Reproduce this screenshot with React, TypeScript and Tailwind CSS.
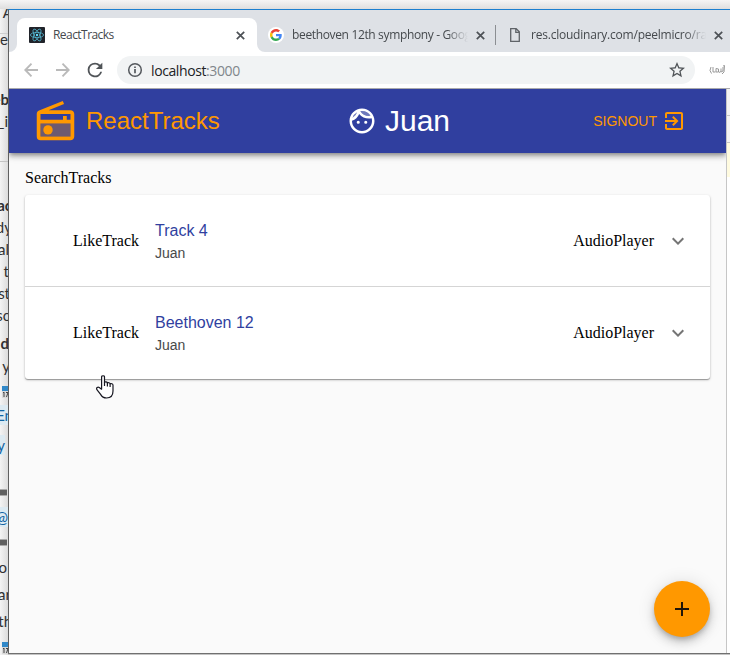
import React from "react";

const ui = "font-['Open_Sans',sans-serif]";

function Close() {
  return (
    <svg className="h-[9px] w-[9px] shrink-0" viewBox="0 0 9 9" stroke="#4d5156" strokeWidth="1.7" fill="none">
      <path d="M.8.8l7.4 7.4M8.2.8L.8 8.2" />
    </svg>
  );
}

function ReactLogo() {
  return (
    <svg className="h-4 w-4 shrink-0" viewBox="0 0 16 16" fill="none" stroke="#53b5cf" strokeWidth=".8">
      <rect width="16" height="16" rx="1" fill="#20232a" stroke="none" />
      <ellipse cx="8" cy="8" rx="6.6" ry="2.6" />
      <ellipse cx="8" cy="8" rx="6.6" ry="2.6" transform="rotate(60 8 8)" />
      <ellipse cx="8" cy="8" rx="6.6" ry="2.6" transform="rotate(120 8 8)" />
      <circle cx="8" cy="8" r="1.2" fill="#61dafb" stroke="none" />
    </svg>
  );
}

function GoogleLogo() {
  return (
    <svg className="h-4 w-4 shrink-0" viewBox="0 0 16 16">
      <circle cx="8" cy="8" r="8" fill="#fff" />
      <g transform="translate(2 2) scale(.25)">
        <path fill="#EA4335" d="M24 9.5c3.54 0 6.71 1.22 9.21 3.6l6.85-6.85C35.9 2.38 30.47 0 24 0 14.62 0 6.51 5.38 2.56 13.22l7.98 6.19C12.43 13.72 17.74 9.5 24 9.5z" />
        <path fill="#4285F4" d="M46.98 24.55c0-1.57-.15-3.09-.38-4.55H24v9.02h12.94c-.58 2.96-2.26 5.48-4.78 7.18l7.73 6c4.51-4.18 7.09-10.36 7.09-17.65z" />
        <path fill="#FBBC05" d="M10.53 28.59c-.48-1.45-.76-2.99-.76-4.59s.27-3.14.76-4.59l-7.98-6.19C.92 16.46 0 20.12 0 24c0 3.88.92 7.54 2.56 10.78l7.97-6.19z" />
        <path fill="#34A853" d="M24 48c6.48 0 11.93-2.13 15.89-5.81l-7.73-6c-2.15 1.45-4.92 2.3-8.16 2.3-6.26 0-11.57-4.22-13.47-9.91l-7.98 6.19C6.51 42.62 14.62 48 24 48z" />
      </g>
    </svg>
  );
}

function TabStrip() {
  return (
    <div className={`flex h-[42px] shrink-0 items-end bg-[#dee1e6] text-[12px] text-[#45494d] ${ui}`}>
      <svg className="h-2 w-2 shrink-0" viewBox="0 0 8 8"><path d="M8 0v8H0a8 8 0 0 0 8-8z" fill="#fff" /></svg>
      <div className="flex h-[34px] w-[240px] shrink-0 items-center rounded-t-lg bg-white pr-3 pl-3">
        <ReactLogo />
        <span className="ml-2 flex-1 tracking-[-0.55px]">ReactTracks</span>
        <Close />
      </div>
      <svg className="h-2 w-2 shrink-0" viewBox="0 0 8 8"><path d="M0 0v8h8a8 8 0 0 1-8-8z" fill="#fff" /></svg>
      <div className="flex h-[34px] w-[230px] shrink-0 items-center pl-[3px]">
        <GoogleLogo />
        <span className="ml-2 w-[176px] shrink-0 overflow-hidden whitespace-nowrap tracking-[-0.35px] [mask-image:linear-gradient(to_right,black_88%,transparent)]">beethoven 12th symphony - Google</span>
        <span className="ml-2 flex"><Close /></span>
      </div>
      <div className="mb-[7px] h-[20px] w-px shrink-0 bg-[#8b8e92]" />
      <div className="flex h-[34px] flex-1 items-center pl-[14px]">
        <svg className="h-[14px] w-[10px] shrink-0" viewBox="0 0 10 14" fill="none" stroke="#5f6368" strokeWidth="1.3">
          <path d="M.7.7h5.5l3.1 3.1v9.5H.7zM5.8.7v3.6h3.5" />
        </svg>
        <span className="ml-[11px] w-[175px] shrink-0 overflow-hidden whitespace-nowrap tracking-[-0.22px] [mask-image:linear-gradient(to_right,black_88%,transparent)]">res.cloudinary.com/peelmicro/raw/upload</span>
        <span className="ml-2 flex"><Close /></span>
      </div>
    </div>
  );
}

function Toolbar() {
  return (
    <div className="flex h-9 shrink-0 items-center bg-white">
      <svg className="ml-[15px] h-[14px] w-[14px]" viewBox="0 0 14 14" fill="none" stroke="#bababa" strokeWidth="1.9"><path d="M14 7H1.5M7.5.7L1.3 7l6.2 6.3" /></svg>
      <svg className="ml-[18px] h-[14px] w-[14px]" viewBox="0 0 14 14" fill="none" stroke="#bababa" strokeWidth="1.9"><path d="M0 7h12.5M6.5.7L12.7 7l-6.2 6.3" /></svg>
      <svg className="ml-[14px] h-[22px] w-[22px]" viewBox="0 0 24 24" fill="#505458"><path d="M17.65 6.35A7.96 7.96 0 0 0 12 4a8 8 0 1 0 7.73 10h-2.08A6 6 0 1 1 12 6c1.66 0 3.14.69 4.22 1.78L13 11h7V4l-2.35 2.35z" /></svg>
      <div className="ml-[11px] flex h-7 w-[578px] shrink-0 items-center rounded-full bg-[#f1f3f4] pr-2.5 pl-2.5">
        <svg className="h-4 w-4" viewBox="0 0 16 16" fill="none" stroke="#55595e" strokeWidth="1.5"><circle cx="8" cy="8" r="6.3" /><path d="M8 7.1v4.2M8 4.5v1.5" strokeWidth="1.7" /></svg>
        <span className={`ml-2 flex-1 text-[14px] tracking-[-0.4px] text-[#202124] ${ui}`}>localhost<span className="text-[#80868b]">:3000</span></span>
        <svg className="h-4 w-4" viewBox="2 2 20 20" fill="#505458"><path d="M22 9.24l-7.19-.62L12 2 9.19 8.63 2 9.24l5.46 4.73L5.82 21 12 17.27 18.18 21l-1.63-7.03L22 9.24zM12 15.4l-3.76 2.27 1-4.28-3.32-2.88 4.38-.38L12 6.1l1.71 4.04 4.38.38-3.32 2.88 1 4.28L12 15.4z" /></svg>
      </div>
      <svg className="ml-[14px] h-3 w-4" viewBox="0 0 16 12" fill="none" stroke="#999" strokeWidth="1">
        <path d="M2 3L1 6.500l1.500 3M4 3v5h2.500M7 4.500v3.500h2.500v-3zM10 8.500l2-1v-3M12 8l2-1V3M14 2l1.500-.5L15 8l-2 2" />
      </svg>
    </div>
  );
}

function AppHeader() {
  return (
    <header className="relative flex h-16 shrink-0 items-center bg-[#303f9f] font-['Liberation_Sans',Arial,sans-serif] text-[#ff9800] shadow-[0_2px_4px_-1px_rgba(0,0,0,0.3),0_4px_5px_rgba(0,0,0,0.18),0_1px_10px_rgba(0,0,0,0.14)]">
      <svg className="ml-6 h-[45px] w-[45px]" viewBox="0 0 24 24" fill="currentColor">
        <path d="M4 20h16v-7H4z" opacity=".3" />
        <path d="M3.24 6.15C2.51 6.43 2 7.17 2 8v12a2 2 0 0 0 2 2h16c1.11 0 2-.9 2-2V8c0-1.11-.89-2-2-2H8.3l8.26-3.34L15.88 1 3.24 6.15zM20 8v3h-2V9h-2v2H4V8h16zM4 20v-7h16v7H4z" />
        <circle cx="8" cy="16.48" r="2.5" />
      </svg>
      <span className="ml-2 w-[261px] text-[24px] leading-8">ReactTracks</span>
      <svg className="h-[30px] w-[30px] text-white" viewBox="0 0 24 24" fill="currentColor">
        <path opacity=".3" d="M10.66 4.12C12.06 6.44 14.6 8 17.5 8c.46 0 .91-.05 1.34-.12C17.44 5.56 14.9 4 12 4c-.46 0-.91.05-1.34.12zM4.42 9.47a8.046 8.046 0 0 0 3.66-4.44 8.046 8.046 0 0 0-3.66 4.44z" />
        <path d="M10.25 13a1.25 1.25 0 1 1-2.5 0 1.25 1.25 0 0 1 2.5 0zM15 11.75a1.25 1.25 0 1 0 0 2.5 1.25 1.25 0 0 0 0-2.5zm7 .25c0 5.52-4.48 10-10 10S2 17.52 2 12 6.48 2 12 2s10 4.48 10 10zM10.66 4.12C12.06 6.44 14.6 8 17.5 8c.46 0 .91-.05 1.34-.12C17.44 5.56 14.9 4 12 4c-.46 0-.91.05-1.34.12zM4.42 9.47a8.046 8.046 0 0 0 3.66-4.44 8.046 8.046 0 0 0-3.66 4.44zM20 12c0-.78-.12-1.53-.33-2.24-.7.15-1.42.24-2.17.24a10 10 0 0 1-7.76-3.69A10.016 10.016 0 0 1 4 11.86c.01.04 0 .09 0 .14 0 4.41 3.59 8 8 8s8-3.59 8-8z" />
      </svg>
      <span className="ml-2 flex-1 text-[30px] leading-9 text-white">Juan</span>
      <span className="text-[14px]">SIGNOUT</span>
      <svg className="mr-10 ml-[5px] h-6 w-6" viewBox="0 0 24 24" fill="currentColor">
        <path d="M10.09 15.59L11.5 17l5-5-5-5-1.41 1.41L12.67 11H3v2h9.67l-2.58 2.59zM19 3H5c-1.11 0-2 .9-2 2v4h2V5h14v14H5v-4H3v4c0 1.1.89 2 2 2h14c1.1 0 2-.9 2-2V5c0-1.1-.9-2-2-2z" />
      </svg>
    </header>
  );
}

function TrackRow({ title }: { title: string }) {
  return (
    <div className="flex h-[91px] items-center pl-12 font-['Liberation_Serif','Times_New_Roman',serif] text-[16px] text-black">
      <span className="w-[82px]">LikeTrack</span>
      <div className="flex flex-1 flex-col pt-0.5 font-['Liberation_Sans',Arial,sans-serif]">
        <span className="leading-6 text-[#303f9f]">{title}</span>
        <span className="text-[14px] leading-[21px] text-[#494949]">Juan</span>
      </div>
      <span>AudioPlayer</span>
      <svg className="mr-5 ml-3 h-6 w-6" viewBox="0 0 24 24" fill="#757575"><path d="M16.59 8.59L12 13.17 7.41 8.59 6 10l6 6 6-6z" /></svg>
    </div>
  );
}

const scraps: [string, string][] = [
  ["top-[2px] right-[-5px]", "? A"],
  ["top-[29px] right-0", "he"],
  ["top-[89px] right-[-1px] font-bold", "eb"],
  ["top-[111px] right-0", "_i"],
  ["top-[195px] right-[-4px] font-bold", "ac"],
  ["top-[217px] right-[-4px]", "dy"],
  ["top-[239px] right-[-1px]", "al"],
  ["top-[261px] right-[-1px]", "t"],
  ["top-[283px] right-[-2px]", "st"],
  ["top-[305px] right-[-2px]", "sc"],
  ["top-[333px] right-[-1px] font-bold", "d"],
  ["top-[356px] right-[-2px]", "y"],
  ["top-[405px] right-[-5px] bg-[#dceaf2] text-[#1264a3]", "En"],
  ["top-[435px] right-[3px] bg-[#dceaf2] text-[#1264a3]", "y"],
  ["top-[507px] right-0 bg-[#dceaf2] text-[#1264a3]", "@"],
  ["top-[557px] right-[1px]", "o"],
  ["top-[584px] right-[-3px]", "ar"],
  ["top-[611px] right-[-4px]", "th"],
];

function Behind() {
  return (
    <div className="relative w-2 shrink-0 overflow-hidden bg-gradient-to-r from-[#f4f4f4] to-[#dcdcdc] font-[Lato,sans-serif] text-[15px] leading-[20px] text-[#303133]">
      <div className="absolute top-[24px] h-px w-2 bg-[#cfcfcf]" />
      <div className="absolute top-[152px] h-px w-2 bg-[#c4c4c4]" />
      <div className="absolute top-[480px] h-[7px] w-[7px] border-y border-[#aaa] bg-[#606060]" />
      <div className="absolute top-[530px] h-[7px] w-[7px] border-y border-[#aaa] bg-[#606060]" />
      {scraps.map(([cls, text], i) => (
        <span key={i} className={`absolute -mt-[9px] whitespace-nowrap ${cls}`}>{text}</span>
      ))}
      <Calendar className="top-[376px]" />
      <Calendar className="top-[632px]" />
    </div>
  );
}

function Calendar({ className }: { className: string }) {
  return (
    <svg className={`absolute left-0.5 h-[14px] w-[7px] ${className}`} viewBox="0 0 7 14">
      <path d="M0 1h7v12H0z" fill="#d8d8d8" /><path d="M0 1h7v5H0z" fill="#3188c8" />
      <path d="M1 8l1-1v5M4 7.5h2L4.5 12" fill="none" stroke="#444" />
    </svg>
  );
}

export default function App() {
  return (
    <div className="relative flex h-[655px] w-[730px] flex-col overflow-hidden bg-[#eee]">
      <div className="h-[9px] shrink-0 bg-gradient-to-b from-[#f5f5f5] to-[#dedede]" />
      <div className="flex min-h-0 flex-1">
        <Behind />
        <div className="flex min-w-0 flex-1 flex-col">
          <div className="flex h-[644px] shrink-0 flex-col border-t border-l border-t-[#1b7fcf] border-l-[#606060]">
            <TabStrip />
            <Toolbar />
            <div className="h-px shrink-0 bg-[#a9a9ac]" />
            <div className="flex min-h-0 flex-1">
              <div className="flex w-[717px] shrink-0 flex-col overflow-hidden bg-[#fafafa]">
                <AppHeader />
                <main className="flex flex-1 flex-col px-4 pt-4">
                  <div className="font-['Liberation_Serif','Times_New_Roman',serif] text-[16px] leading-[18px] text-black">SearchTracks</div>
                  <div className="mt-2 rounded-[3px] bg-white shadow-[0_1px_1px_rgba(0,0,0,0.3),0_1px_3px_rgba(0,0,0,0.2)]">
                    <TrackRow title="Track 4" />
                    <div className="h-px bg-[#d5d5d5]" />
                    <TrackRow title="Beethoven 12" />
                    <div className="h-px" />
                  </div>
                  <button className="mt-auto mb-4 flex h-14 w-14 items-center justify-center self-end rounded-full bg-[#ff9800] shadow-[0_3px_5px_-1px_rgba(0,0,0,0.2),0_6px_10px_rgba(0,0,0,0.14),0_1px_18px_rgba(0,0,0,0.12)]">
                    <svg className="h-6 w-6" viewBox="0 0 24 24" fill="#21160a"><path d="M19 13h-6v6h-2v-6H5v-2h6V5h2v6h6z" /></svg>
                  </button>
                </main>
              </div>
              <div className="flex flex-1 flex-col border-l border-[#c6c6c6] bg-white">
                <div className="h-[27px] border-b border-[#c6c6c6] bg-[#f3f3f3]" />
                <div className="h-[27px] border-b border-[#c6c6c6] bg-[#f3f3f3]" />
                <div className="h-[34px] bg-[#fffbe0]" />
              </div>
            </div>
          </div>
          <div className="h-px shrink-0 bg-[#707070]" />
          <div className="h-px shrink-0 bg-[#c4c4c4]" />
        </div>
      </div>
      <svg className="absolute top-[375px] left-[96px] h-6 w-[18px]" viewBox="0 0 18 24" fill="#fff" stroke="#171721" strokeWidth="1.2" strokeLinejoin="round">
        <path d="M5.6 14.2V2c0-1.7 2.9-1.7 2.9 0v5.2c.8-.7 2.6-.5 2.9.8.8-.6 2.4-.4 2.7.8 1-.5 2.9-.1 2.9 1.4V16c0 4.300-2 7-6.500 7-3.300 0-4.600-1.200-5.900-3.600L.9 14.700c-1-1.900 1-3 2.300-2.200z" />
        <path d="M8.500 7v4M11.400 8v3.500M14.100 9v3" fill="none" />
      </svg>
    </div>
  );
}
